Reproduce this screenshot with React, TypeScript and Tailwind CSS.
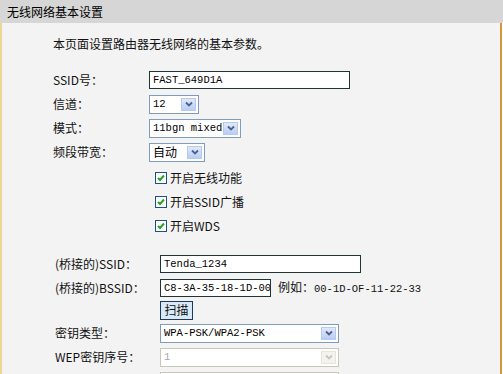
import React from 'react';

const cjk = '"Noto Sans CJK SC", "Noto Sans", sans-serif';
const mono = '"Liberation Mono", "Noto Sans CJK SC", monospace';

function Arrow({ disabled }: { disabled?: boolean }) {
  return (
    <span
      className={`absolute right-[2px] top-[2px] bottom-[2px] w-[15px] flex items-center justify-center border ${
        disabled ? 'bg-[#f4f3ee] border-[#e6e4dc]' : 'bg-gradient-to-b from-[#e0e9fb] to-[#b9cdf4] border-[#b8c9ee]'
      }`}
    >
      <svg width="8" height="6" viewBox="0 0 8 6">
        <path d="M1 1.5 L4 4.5 L7 1.5" fill="none" stroke={disabled ? '#c8c6bc' : '#4d6185'} strokeWidth="1.8" />
      </svg>
    </span>
  );
}

function Select({ value, width, disabled, cn }: { value: string; width: string; disabled?: boolean; cn?: boolean }) {
  return (
    <div
      className={`relative h-[19px] ${width} border bg-white flex items-center pl-[3px] overflow-hidden whitespace-nowrap ${
        disabled ? 'border-[#c9c7ba] text-[#a8a8a8]' : 'border-[#7f9db9] text-black'
      }`}
      style={{ fontFamily: cn ? cjk : mono }}
    >
      <span className={cn ? 'text-[12px] leading-none' : 'text-[10.5px] leading-none'}>{value}</span>
      <Arrow disabled={disabled} />
    </div>
  );
}

function TextBox({ value, width }: { value: string; width: string }) {
  return (
    <div
      className={`h-[18px] ${width} border border-[#1f3535] bg-white flex items-center pl-[3px] text-[10.5px] leading-none text-black overflow-hidden whitespace-nowrap`}
      style={{ fontFamily: mono }}
    >
      {value}
    </div>
  );
}

function Check({ label }: { label: string }) {
  return (
    <div className="h-[24px] flex items-center pl-[153px] gap-[3px]">
      <span className="w-[12px] h-[12px] border border-[#1c5180] bg-white flex items-center justify-center">
        <svg width="10" height="10" viewBox="0 0 10 10">
          <path d="M2 5 L4 7 L8 2.5" fill="none" stroke="#21a121" strokeWidth="1.9" />
        </svg>
      </span>
      <span className="text-[12px]">{label}</span>
    </div>
  );
}

function Row({ label, labelW, children, h = 'h-[24px]' }: { label?: string; labelW: string; children: React.ReactNode; h?: string }) {
  return (
    <div className={`${h} flex items-center`}>
      <div className={`${labelW} shrink-0 text-[12px] whitespace-nowrap`}>{label}</div>
      {children}
    </div>
  );
}

export default function App() {
  return (
    <div className="w-[503px] h-[374px] overflow-hidden bg-white text-[#111]" style={{ fontFamily: cjk }}>
      <div className="h-[23px] bg-[#d6d6d6] flex items-center pl-[7px] text-[12px] text-black">无线网络基本设置</div>
      <div className="h-[351px] bg-[#f3f3f3] border-l-[2px] border-l-[#ecd890] border-r-[2px] border-r-[#d4963a] mr-[1px] pt-[9px]">
        <div className="h-[24px] flex items-center pl-[51px] text-[12px]">本页面设置路由器无线网络的基本参数。</div>

        <div className="pl-[51px] mt-[12px]">
          <Row label="SSID号：" labelW="w-[96px]">
            <TextBox value="FAST_649D1A" width="w-[201px]" />
          </Row>
          <Row label="信道：" labelW="w-[96px]">
            <Select value="12" width="w-[50px]" />
          </Row>
          <Row label="模式：" labelW="w-[96px]">
            <Select value="11bgn mixed" width="w-[92px]" />
          </Row>
          <Row label="频段带宽：" labelW="w-[96px]">
            <Select value="自动" width="w-[56px]" cn />
          </Row>
        </div>

        <div className="mt-[2px]">
          <Check label="开启无线功能" />
          <Check label="开启SSID广播" />
          <Check label="开启WDS" />
        </div>

        <div className="pl-[53px] mt-[14px]">
          <Row label="(桥接的)SSID：" labelW="w-[105px]">
            <TextBox value="Tenda_1234" width="w-[201px]" />
          </Row>
          <Row label="(桥接的)BSSID：" labelW="w-[105px]">
            <TextBox value="C8-3A-35-18-1D-00" width="w-[111px]" />
            <span className="ml-[7px] text-[12px] whitespace-nowrap">
              例如：<span className="text-[10.5px]" style={{ fontFamily: mono }}>00-1D-OF-11-22-33</span>
            </span>
          </Row>
          <Row labelW="w-[105px]" h="h-[20px]">
            <div className="h-[19px] w-[33px] bg-[#dae9f7] border border-[#1c3a5a] flex items-center justify-center text-[12px] leading-none">
              扫描
            </div>
          </Row>
          <div className="mt-[1px]">
            <Row label="密钥类型：" labelW="w-[105px]">
              <Select value="WPA-PSK/WPA2-PSK" width="w-[179px]" />
            </Row>
            <Row label="WEP密钥序号：" labelW="w-[105px]">
              <Select value="1" width="w-[179px]" disabled />
            </Row>
            <Row labelW="w-[105px]">
              <Select value="" width="w-[179px]" disabled />
            </Row>
          </div>
        </div>
      </div>
    </div>
  );
}
